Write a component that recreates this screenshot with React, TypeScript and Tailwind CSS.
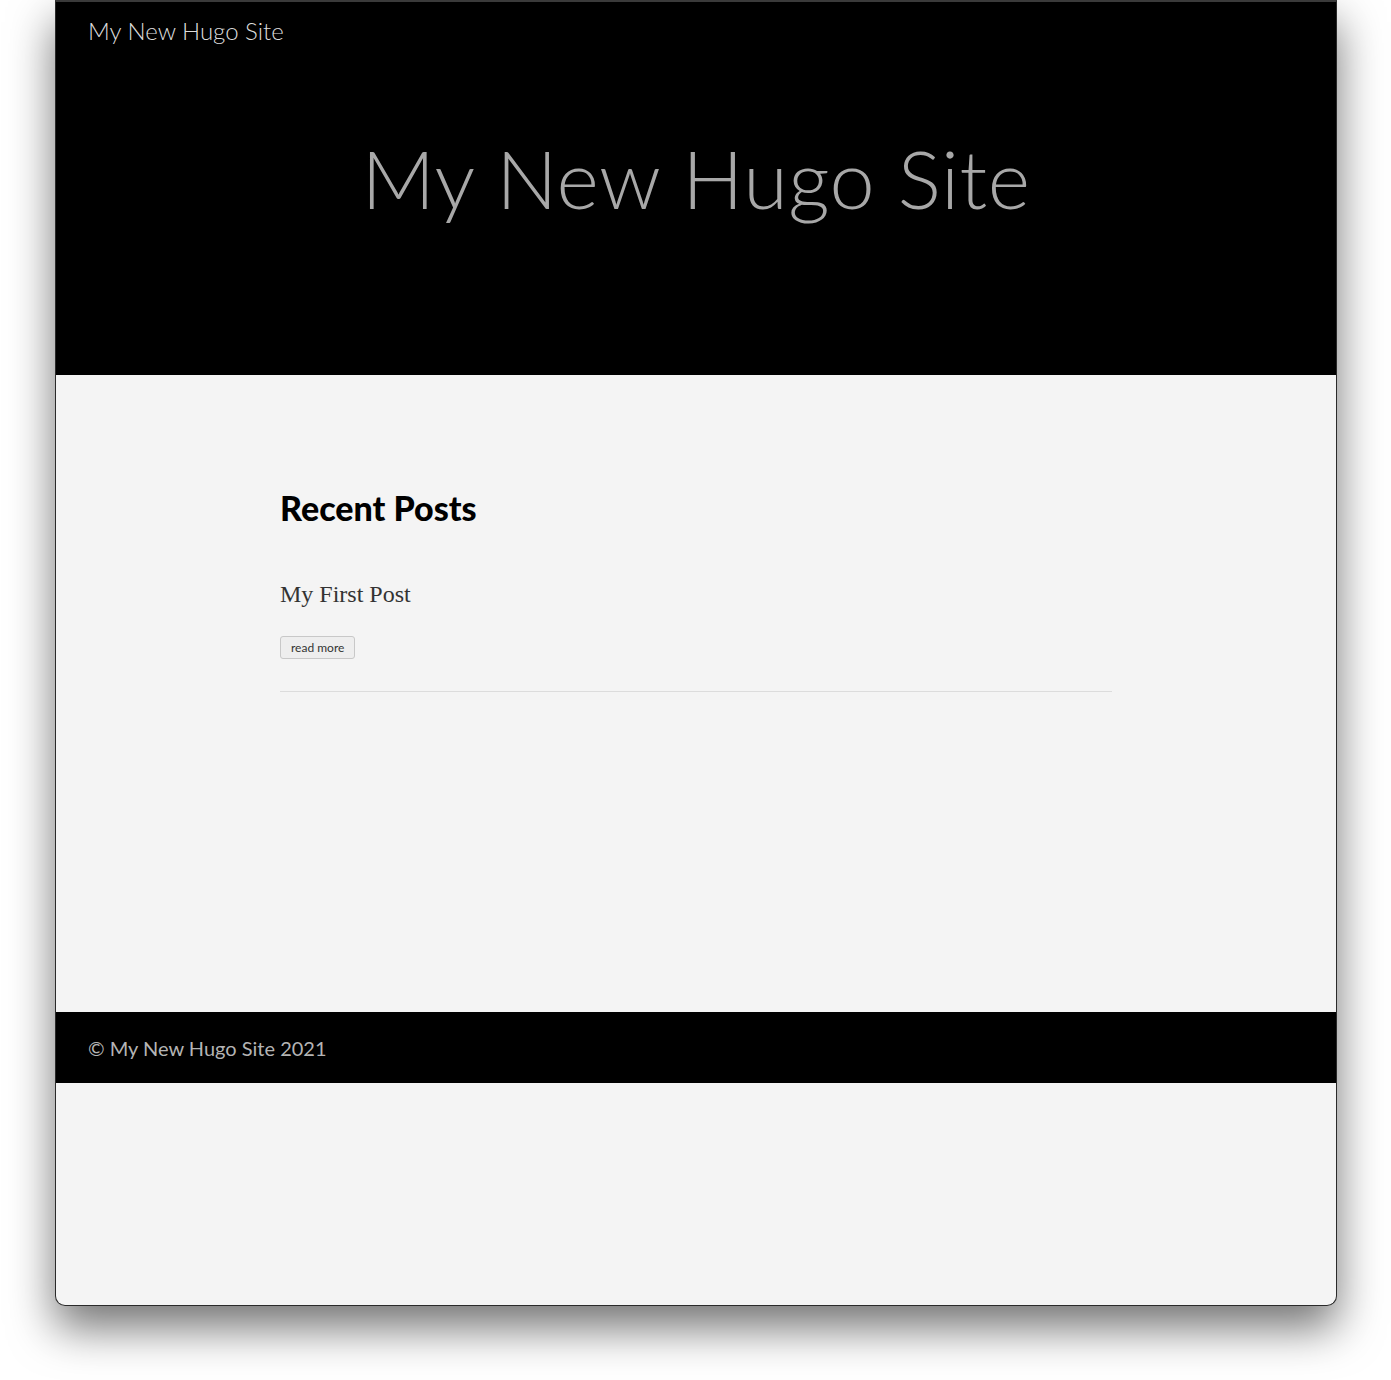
export default function App() {
  return (
    <div className="min-h-[1380px] bg-white pl-[55px] pr-[54px] font-['Lato',sans-serif]">
      <div className="flex h-[1306px] flex-col overflow-hidden rounded-b-[10px] border border-t-2 border-[#2a2a2a] border-t-[#3a3a3a] bg-[#f4f4f4] shadow-[0_22px_45px_rgba(0,0,0,0.55)]">
        {/* Header */}
        <header className="h-[373px] bg-black">
          <nav className="px-8 pt-[13px]">
            <a className="text-[24px] font-light leading-[32px] text-[#dcdcdc]">My New Hugo Site</a>
          </nav>
          <h1 className="mt-[86px] text-center text-[81px] font-light leading-[90px] tracking-[0.5px] text-[#a8a8a8]">
            My New Hugo Site
          </h1>
        </header>

        {/* Posts */}
        <main className="flex-1 px-[224px] pt-[111px]">
          <h2 className="text-[34px] font-black leading-[44px] text-black">Recent Posts</h2>
          <article className="mt-[48px] border-b border-[#dcdcdc] pb-[32px]">
            <h3 className="font-['Liberation_Serif',serif] text-[24px] leading-[32px] text-[#333]">My First Post</h3>
            <a className="mt-[26px] inline-block rounded-[3px] border border-[#c8c8c8] bg-[#eeeeee] px-[10px] text-[12px] leading-[21px] text-[#333]">
              read more
            </a>
          </article>
        </main>

        {/* Footer */}
        <footer className="flex h-[71px] items-center bg-black px-8">
          <p className="text-[20px] leading-[28px] text-[#b4b4b4]">© My New Hugo Site 2021</p>
        </footer>
        <div className="h-[222px]" />
      </div>
    </div>
  )
}
